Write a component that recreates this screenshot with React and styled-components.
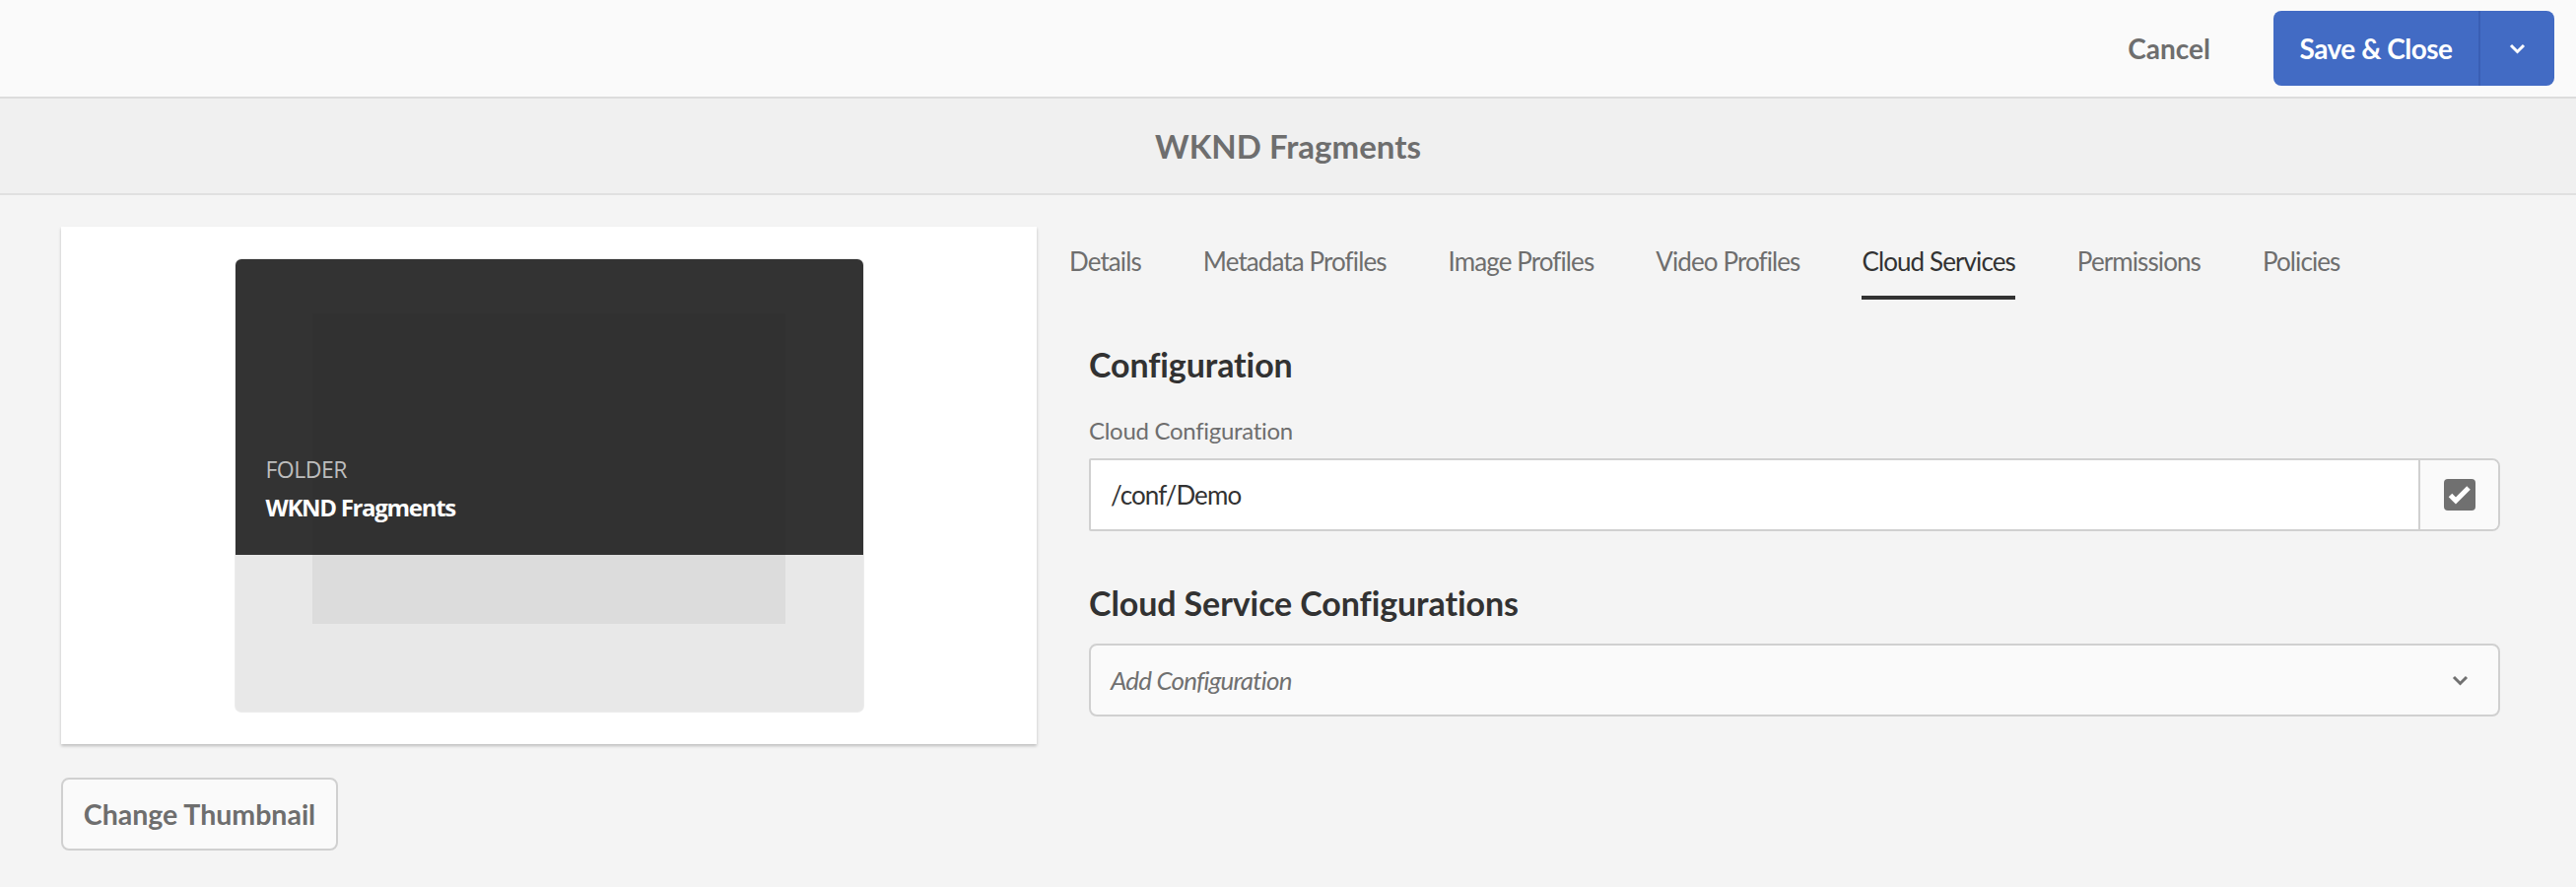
import React from "react";
import styled, { createGlobalStyle } from "styled-components";

const GlobalStyle = createGlobalStyle`
  body {
    margin: 0;
    background: #f4f4f4;
    font-family: "Lato", "Open Sans", sans-serif;
    color: #323232;
  }
`;

const TopBar = styled.div`
  height: 98px;
  background: #fafafa;
  border-bottom: 2px solid #dcdcdc;
  display: flex;
  align-items: center;
  justify-content: flex-end;
  padding-right: 22px;
`;

const QuietButton = styled.button`
  background: none;
  border: none;
  font-family: inherit;
  font-size: 28px;
  font-weight: 700;
  color: #6e6e6e;
  padding: 0;
  margin-right: 64px;
`;

const SplitButton = styled.div`
  display: flex;
  height: 76px;
  border-radius: 8px;
  background: #426bc4;
  overflow: hidden;
`;

const SplitMain = styled.div`
  display: flex;
  align-items: center;
  justify-content: center;
  width: 208px;
  white-space: nowrap;
  color: #fff;
  font-size: 28px;
  font-weight: 700;
  letter-spacing: -0.5px;
`;

const SplitToggle = styled.div`
  width: 75px;
  display: flex;
  align-items: center;
  justify-content: center;
  border-left: 2px solid #3a5fb4;
`;

const TitleBand = styled.div`
  height: 96px;
  background: #f0f0f0;
  border-bottom: 2px solid #e0e0e0;
  display: flex;
  align-items: center;
  justify-content: center;
  font-size: 33px;
  font-weight: 700;
  color: #6e6e6e;
`;

const Content = styled.div`
  display: grid;
  grid-template-columns: 990px 1fr;
  column-gap: 33px;
  padding: 32px 77px 0 62px;
`;

const LeftCol = styled.div`
  display: flex;
  flex-direction: column;
  align-items: flex-start;
`;

const Card = styled.div`
  width: 100%;
  height: 525px;
  background: #fff;
  box-shadow: 0 2px 3px rgba(0, 0, 0, 0.22);
  display: flex;
  justify-content: center;
  padding-top: 33px;
  box-sizing: border-box;
`;

const Thumb = styled.div`
  position: relative;
  width: 637px;
  height: 459px;
  border-radius: 6px;
  overflow: hidden;
  background: #e8e8e8;
  box-shadow: 0 0 0 1px #ececec;
  display: flex;
  justify-content: center;
  padding-top: 55px;
  box-sizing: border-box;
`;

const Placeholder = styled.div`
  width: 480px;
  height: 315px;
  background: #dcdcdc;
`;

const Overlay = styled.div`
  position: absolute;
  left: 0;
  top: 0;
  right: 0;
  height: 300px;
  background: rgba(15, 15, 15, 0.833);
  display: flex;
  flex-direction: column;
  justify-content: flex-end;
  padding: 0 31px 30px;
  box-sizing: border-box;
  font-family: "Open Sans", sans-serif;
`;

const Kind = styled.div`
  font-size: 23px;
  color: #bdbdbd;
  letter-spacing: -0.5px;
  line-height: 32px;
`;

const ThumbTitle = styled.div`
  font-size: 24px;
  font-weight: 700;
  color: #fff;
  letter-spacing: -1.3px;
  line-height: 36px;
  margin-top: 5px;
`;

const SecondaryButton = styled.button`
  margin-top: 34px;
  width: 281px;
  height: 74px;
  background: #fafafa;
  border: 2px solid #d0d0d0;
  border-radius: 8px;
  font-family: inherit;
  font-size: 28.5px;
  font-weight: 700;
  color: #6e6e6e;
`;

const RightCol = styled.div`
  display: flex;
  flex-direction: column;
`;

const Tabs = styled.div`
  display: flex;
  gap: 63px;
`;

const Tab = styled.div`
  padding: 15px 0;
  line-height: 40px;
  font-size: 26px;
  letter-spacing: -0.9px;
  color: ${(p) => (p.$active ? "#323232" : "#6e6e6e")};
  border-bottom: 4px solid ${(p) => (p.$active ? "#323232" : "transparent")};
`;

const Form = styled.div`
  padding-left: 20px;
  display: flex;
  flex-direction: column;
`;

const Heading = styled.h3`
  margin: ${(p) => p.$top}px 0 0;
  font-size: 34px;
  line-height: 44px;
  font-weight: 700;
  letter-spacing: -0.1px;
  color: #323232;
`;

const Label = styled.label`
  margin-top: 28px;
  font-size: 24px;
  line-height: 34px;
  letter-spacing: -0.3px;
  color: #6e6e6e;
`;

const InputGroup = styled.div`
  margin-top: 11px;
  display: flex;
  height: 74px;
  border: 2px solid #d0d0d0;
  border-radius: 2px 8px 8px 2px;
  box-sizing: border-box;
  overflow: hidden;
`;

const Field = styled.div`
  flex: 1;
  background: #fff;
  display: flex;
  align-items: center;
  padding-left: 20px;
  font-size: 26px;
  letter-spacing: -0.9px;
  color: #323232;
`;

const Addon = styled.div`
  width: 79px;
  background: #fafafa;
  border-left: 2px solid #d0d0d0;
  display: flex;
  align-items: center;
  justify-content: center;
`;

const Select = styled.div`
  margin-top: 19px;
  height: 74px;
  border: 2px solid #d0d0d0;
  border-radius: 8px;
  background: #fafafa;
  box-sizing: border-box;
  display: flex;
  align-items: center;
  justify-content: space-between;
  padding: 0 30px 0 20px;
  font-size: 26px;
  letter-spacing: -0.8px;
  font-style: italic;
  color: #707070;
`;

const Chevron = ({ color }) => (
  <svg width="17" height="11" viewBox="0 0 17 11">
    <path d="M2 2l6.5 6.5L15 2" fill="none" stroke={color} strokeWidth="3" />
  </svg>
);

const CheckBox = () => (
  <svg width="32" height="32" viewBox="0 0 32 32">
    <rect width="32" height="32" rx="4" fill="#707070" />
    <path d="M6.5 16.5l5.5 5.5L25 9" fill="none" stroke="#fff" strokeWidth="5" />
  </svg>
);

const tabs = [
  "Details",
  "Metadata Profiles",
  "Image Profiles",
  "Video Profiles",
  "Cloud Services",
  "Permissions",
  "Policies",
];

export default function App() {
  return (
    <>
      <GlobalStyle />
      <TopBar>
        <QuietButton>Cancel</QuietButton>
        <SplitButton>
          <SplitMain>Save &amp; Close</SplitMain>
          <SplitToggle>
            <Chevron color="#fff" />
          </SplitToggle>
        </SplitButton>
      </TopBar>
      <TitleBand>WKND Fragments</TitleBand>
      <Content>
        <LeftCol>
          <Card>
            <Thumb>
              <Placeholder />
              <Overlay>
                <Kind>FOLDER</Kind>
                <ThumbTitle>WKND Fragments</ThumbTitle>
              </Overlay>
            </Thumb>
          </Card>
          <SecondaryButton>Change Thumbnail</SecondaryButton>
        </LeftCol>
        <RightCol>
          <Tabs>
            {tabs.map((t) => (
              <Tab key={t} $active={t === "Cloud Services"}>
                {t}
              </Tab>
            ))}
          </Tabs>
          <Form>
            <Heading $top={44}>Configuration</Heading>
            <Label>Cloud Configuration</Label>
            <InputGroup>
              <Field>/conf/Demo</Field>
              <Addon>
                <CheckBox />
              </Addon>
            </InputGroup>
            <Heading $top={51}>Cloud Service Configurations</Heading>
            <Select>
              Add Configuration
              <Chevron color="#707070" />
            </Select>
          </Form>
        </RightCol>
      </Content>
    </>
  );
}
